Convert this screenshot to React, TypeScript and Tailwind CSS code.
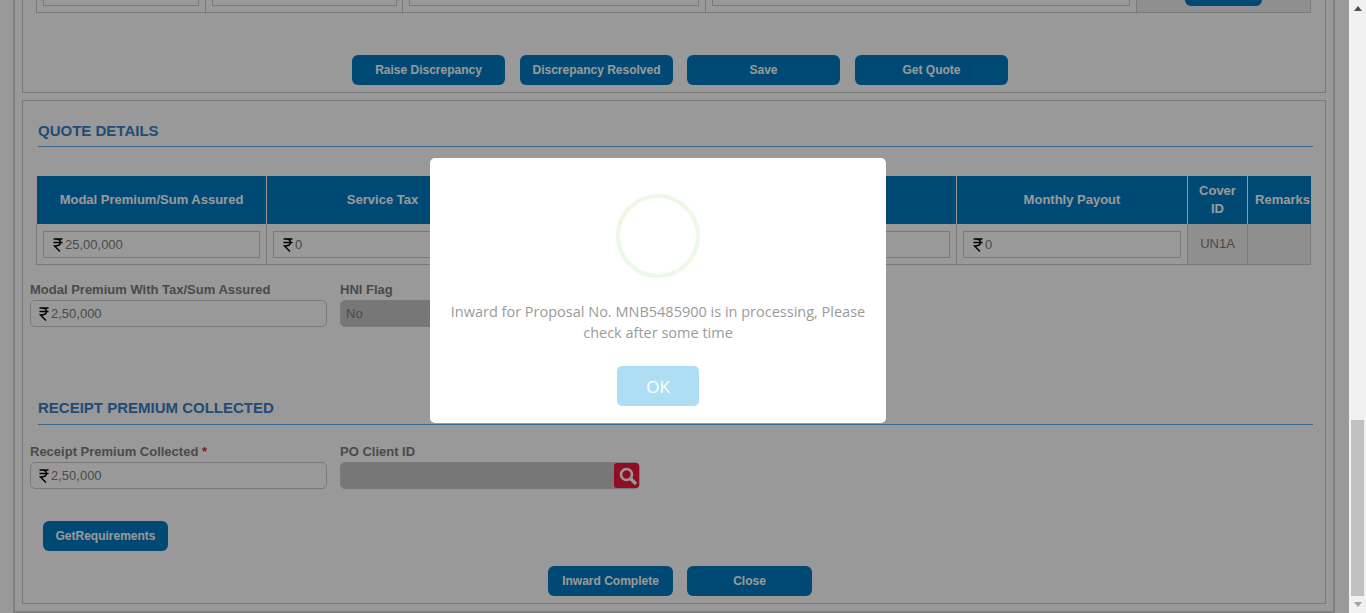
import React from "react";

const FONT = "font-['Liberation_Sans',Arial,sans-serif]";

function RupeeIcon() {
  return (
    <svg width="10" height="14" viewBox="0 0 10 14" fill="none" className="mr-[2px] shrink-0">
      <path d="M0.5 1h9M0.5 4.5h9M3 1c3 0 4.5 1.5 4.5 3.5S6 8 1.5 8L7 13.5" stroke="#000" strokeWidth="1.4" />
    </svg>
  );
}

function SearchIcon() {
  return (
    <svg width="20" height="20" viewBox="0 0 20 20" fill="none" className="ml-[3px] shrink-0">
      <circle cx="8.5" cy="8.5" r="5.5" stroke="#fff" strokeWidth="2.6" />
      <path d="M12.5 12.5l5.5 5.5" stroke="#fff" strokeWidth="3.2" />
    </svg>
  );
}

function ActionButton({ label, className }: { label: string; className: string }) {
  return (
    <button className={`h-[30px] rounded-[6px] bg-[#007bc2] text-center text-[12px] font-bold text-white ${className}`}>
      {label}
    </button>
  );
}

function SectionTitle({ title, className }: { title: string; className?: string }) {
  return (
    <div className={`ml-[15px] mr-[12px] border-b border-[#62b0f0] ${className ?? ""}`}>
      <h2 className="text-[15px] font-bold leading-[18px] text-[#3a7dc3]">{title}</h2>
    </div>
  );
}

function CellInput({ value }: { value: string }) {
  return (
    <div className="flex h-[27px] items-center border border-[#ccc] bg-white pl-[9px] text-[13px] text-[#7c7c7c]">
      <RupeeIcon />
      {value}
    </div>
  );
}

function Field({ label, value, required }: { label: string; value: string; required?: boolean }) {
  return (
    <div className="w-[297px]">
      <div className="h-[19px] text-[13px] font-bold leading-[18px] text-[#7c7c7c]">
        {label}
        {required && <span className="text-[#d33]"> *</span>}
      </div>
      <div className="flex h-[27px] items-center rounded-[5px] border border-[#ccc] bg-white pl-[8px] text-[13px] text-[#7c7c7c]">
        <RupeeIcon />
        {value}
      </div>
    </div>
  );
}

function SuccessRing() {
  return (
    <svg width="84" height="84" viewBox="0 0 84 84" fill="none">
      <circle cx="42" cy="42" r="40" stroke="#edf8e7" strokeWidth="4" />
      <path d="M3.5 27.5l1.5 1M56 77l1 1.5" stroke="#cfeac0" strokeWidth="1" />
    </svg>
  );
}

function ScrollArrow({ down }: { down?: boolean }) {
  return (
    <svg width="8" height="5" viewBox="0 0 8 5" className={down ? "rotate-180" : ""}>
      <polygon points="4,0 8,5 0,5" fill={down ? "#a3a3a3" : "#505050"} />
    </svg>
  );
}

export default function App() {
  return (
    <div className={`flex h-[613px] w-[1366px] overflow-hidden bg-white ${FONT}`}>
      <div className="relative h-[613px] w-[1349px] overflow-hidden">
        <div className="ml-[13px] h-[613px] w-[1322px] border-x-[2px] border-b-[2px] border-[#d6d6d6] px-[7px]">
          {/* Proposal panel, scrolled partly out of view */}
          <div className="h-[93px] border-x border-b border-[#ccc]">
            <div className="ml-[13px] flex h-[13px] w-[1275px] border-x border-b border-[#ccc]">
              <div className="flex h-full w-[169px] items-end border-r border-[#ccc] px-[6px] pb-[6px]">
                <div className="h-[27px] w-[156px] shrink-0 border border-[#ccc]" />
              </div>
              <div className="flex h-full w-[197px] items-end border-r border-[#ccc] px-[6px] pb-[6px]">
                <div className="h-[27px] w-[185px] shrink-0 border border-[#ccc]" />
              </div>
              <div className="flex h-full w-[303px] items-end border-r border-[#ccc] px-[6px] pb-[6px]">
                <div className="h-[27px] w-[290px] shrink-0 border border-[#ccc]" />
              </div>
              <div className="flex h-full w-[431px] items-end border-r border-[#ccc] px-[6px] pb-[6px]">
                <div className="h-[27px] w-[418px] shrink-0 border border-[#ccc]" />
              </div>
              <div className="flex h-full flex-1 items-end justify-center bg-[#eee] pb-[6px]">
                <div className="h-[27px] w-[77px] shrink-0 rounded-[6px] bg-[#007bc2]" />
              </div>
            </div>
            <div className="mt-[42px] flex justify-start pl-[329px]">
              <ActionButton label="Raise Discrepancy" className="w-[153px]" />
              <ActionButton label="Discrepancy Resolved" className="ml-[15px] w-[153px]" />
              <ActionButton label="Save" className="ml-[14px] w-[153px]" />
              <ActionButton label="Get Quote" className="ml-[15px] w-[153px]" />
            </div>
          </div>

          {/* Quote panel */}
          <div className="mt-[7px] h-[504px] border border-[#ccc]">
            <SectionTitle title="QUOTE DETAILS" className="mt-[21px] pb-[6px]" />

            <div className="ml-[14px] mt-[29px] w-[1274px]">
              <div className="grid h-[48px] grid-cols-[230px_232px_229px_229px_231px_60px_63px] bg-[#007bc2] text-center text-[13px] font-bold leading-[18px] text-white">
                <div className="flex items-center justify-center border-r border-white">Modal Premium/Sum Assured</div>
                <div className="flex items-center justify-center border-r border-white">Service Tax</div>
                <div className="border-r border-white" />
                <div className="border-r border-white" />
                <div className="flex items-center justify-center border-r border-white">Monthly Payout</div>
                <div className="flex items-center justify-center border-r border-white">
                  Cover
                  <br />
                  ID
                </div>
                <div className="flex items-center justify-end whitespace-nowrap pr-px">Remarks</div>
              </div>
              <div className="-ml-px grid h-[41px] w-[1275px] grid-cols-[230px_232px_229px_229px_231px_60px_62px] border-x border-b border-[#ccc]">
                <div className="border-r border-[#ccc] px-[6px] pt-[7px]">
                  <CellInput value="25,00,000" />
                </div>
                <div className="border-r border-[#ccc] px-[6px] pt-[7px]">
                  <CellInput value="0" />
                </div>
                <div className="border-r border-[#ccc] px-[6px] pt-[7px]">
                  <CellInput value="0" />
                </div>
                <div className="border-r border-[#ccc] px-[6px] pt-[7px]">
                  <CellInput value="0" />
                </div>
                <div className="border-r border-[#ccc] px-[6px] pt-[7px]">
                  <CellInput value="0" />
                </div>
                <div className="flex items-center justify-center border-r border-[#ccc] bg-[#eee] text-[13px] text-[#7c7c7c]">UN1A</div>
                <div className="bg-[#eee]" />
              </div>
            </div>

            <div className="ml-[7px] mt-[16px] flex">
              <Field label="Modal Premium With Tax/Sum Assured" value="2,50,000" />
              <div className="ml-[13px] w-[300px]">
                <div className="h-[19px] text-[13px] font-bold leading-[18px] text-[#7c7c7c]">HNI Flag</div>
                <div className="flex h-[27px] items-center rounded-[5px] border border-[#ccc] bg-[#c6c6c6] pl-[5px] text-[13px] text-[#7c7c7c]">
                  No
                </div>
              </div>
            </div>

            <SectionTitle title="RECEIPT PREMIUM COLLECTED" className="mt-[72px] pb-[7px]" />

            <div className="ml-[7px] mt-[18px] flex">
              <Field label="Receipt Premium Collected" value="2,50,000" required />
              <div className="ml-[13px] w-[300px]">
                <div className="h-[19px] text-[13px] font-bold leading-[18px] text-[#7c7c7c]">PO Client ID</div>
                <div className="flex h-[27px] justify-end rounded-[5px] border border-[#ccc] bg-[#c6c6c6]">
                  <div className="flex w-[25px] items-center justify-center overflow-hidden rounded-[3px] bg-[#ed193e]">
                    <SearchIcon />
                  </div>
                </div>
              </div>
            </div>

            <div className="ml-[20px] mt-[32px]">
              <ActionButton label="GetRequirements" className="w-[125px]" />
            </div>
            <div className="mt-[15px] flex pl-[525px]">
              <ActionButton label="Inward Complete" className="w-[125px]" />
              <ActionButton label="Close" className="ml-[14px] w-[125px]" />
            </div>
          </div>
        </div>

        {/* Dim layer and alert */}
        <div className="absolute inset-0 bg-black/40" />
        <div className="absolute left-[430px] top-[158px] flex h-[265px] w-[456px] flex-col items-center rounded-[5px] bg-white pt-[36px] font-['Open_Sans',sans-serif]">
          <SuccessRing />
          <p className="mt-[23px] w-[424px] text-center text-[14.5px] leading-[21px] text-[#9b9b9b]">
            Inward for Proposal No. MNB5485900 is in processing, Please check after some time
          </p>
          <button className="mt-[23px] h-[40px] w-[82px] rounded-[5px] bg-[#aedef4] pt-[2px] text-[17px] text-white">OK</button>
        </div>
      </div>

      {/* Page scrollbar */}
      <div className="flex h-[613px] w-[17px] flex-col items-center bg-[#f1f1f1]">
        <div className="flex h-[17px] items-center justify-center">
          <ScrollArrow />
        </div>
        <div className="mt-[403px] h-[176px] w-[13px] bg-[#c1c1c1]" />
        <div className="flex h-[17px] flex-1 items-center justify-center">
          <ScrollArrow down />
        </div>
      </div>
    </div>
  );
}
